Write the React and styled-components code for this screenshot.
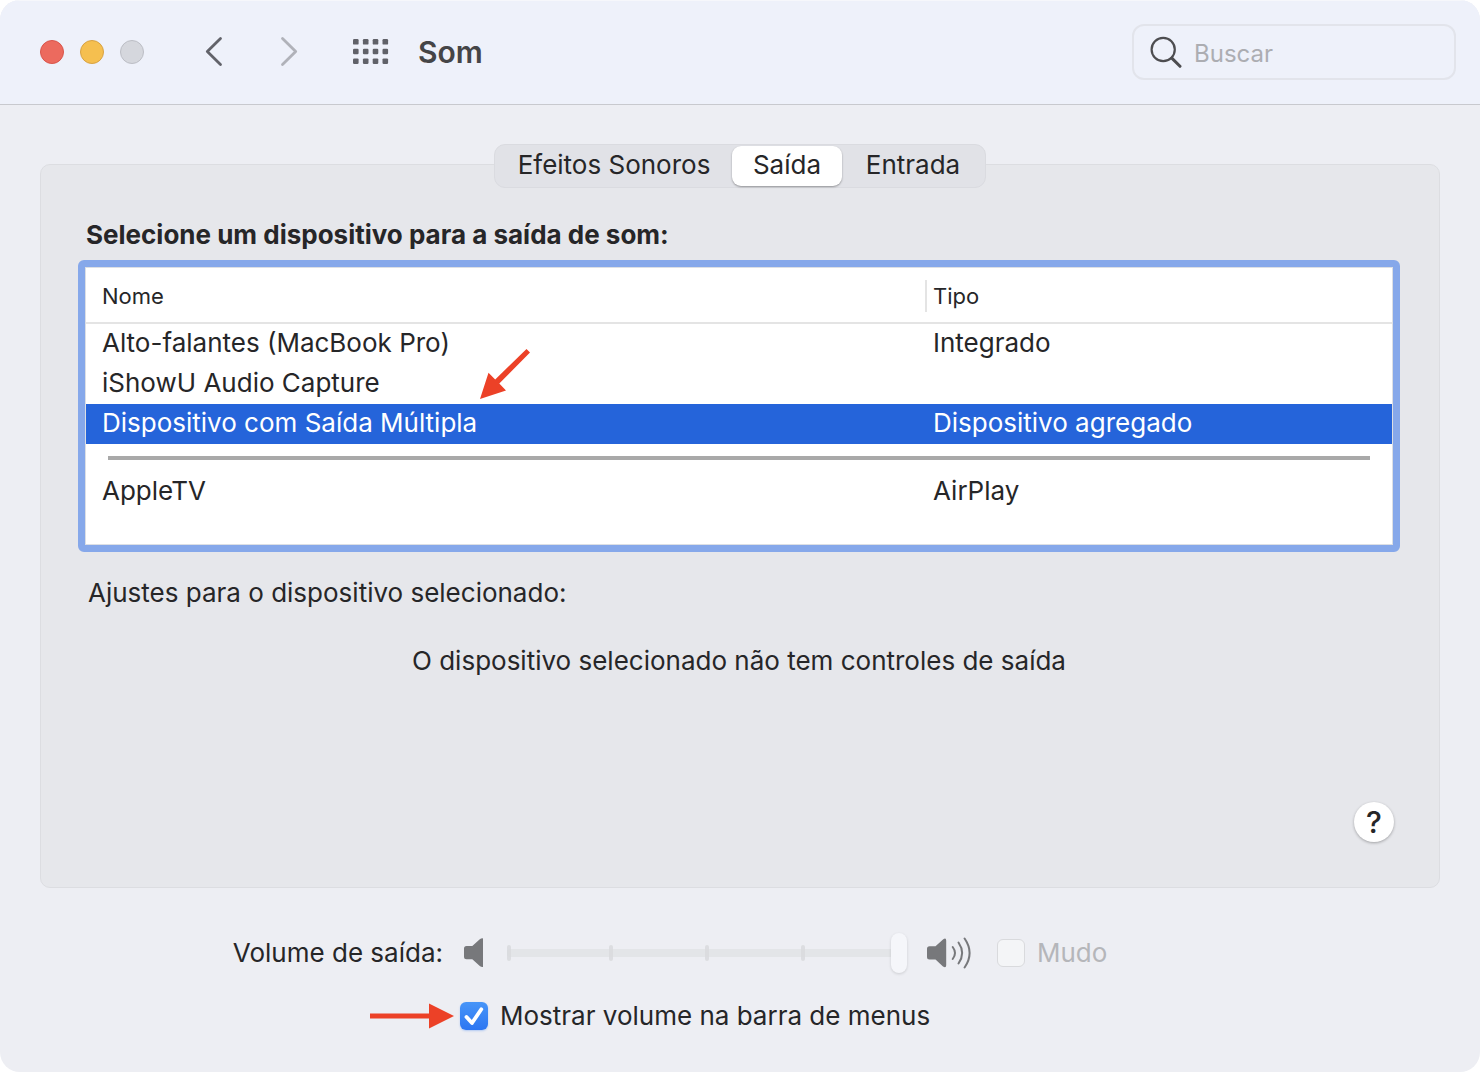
import React, { useState } from "react";
import styled, { createGlobalStyle } from "styled-components";

const GlobalStyle = createGlobalStyle`
  *, *::before, *::after { box-sizing: border-box; }
  html, body { margin: 0; padding: 0; background: #ffffff; }
  body, button, input {
    font-family: Inter, "Liberation Sans", sans-serif;
    font-size: 26px;
    line-height: 32px;
    color: #262628;
  }
  button { margin: 0; padding: 0; border: 0; background: none; }
`;

const Window = styled.main`
  display: flex;
  flex-direction: column;
  min-height: 100vh;
  overflow: hidden;
  border-radius: 20px;
  background: #edeef3;
`;

const Toolbar = styled.header`
  display: flex;
  align-items: center;
  height: 105px;
  padding: 0 24px 2px 40px;
  border-top: 1px solid #f6f7fb;
  border-bottom: 1px solid #c8c9ce;
  background: #eef1fa;
`;

const Lights = styled.div`
  display: flex;
  gap: 16px;
`;

const Light = styled.button`
  width: 24px;
  height: 24px;
  border: 1px solid ${(p) => p.$edge};
  border-radius: 50%;
  background: ${(p) => p.$fill};
`;

const Navigation = styled.nav`
  display: flex;
  gap: 38px;
  margin-left: 52px;
`;

const IconButton = styled.button`
  display: grid;
  place-items: center;
  width: 36px;
  height: 36px;
`;

const Title = styled.h1`
  flex: 1;
  margin: 0 0 0 29px;
  font-size: 30px;
  font-weight: 600;
  line-height: 36px;
  color: #454547;
`;

const AllPanes = styled(IconButton)`
  margin-left: 47px;
`;

const SearchBox = styled.label`
  display: flex;
  align-items: center;
  gap: 12px;
  width: 324px;
  height: 56px;
  padding: 0 16px;
  border: 2px solid #e2e4eb;
  border-radius: 12px;
`;

const SearchInput = styled.input`
  flex: 1;
  min-width: 0;
  padding: 4px 0 0;
  border: 0;
  outline: 0;
  background: transparent;
  font-size: 24px;
  &::placeholder { color: #acadb2; opacity: 1; }
`;

const Content = styled.div`
  display: flex;
  flex: 1;
  flex-direction: column;
  padding: 39px 40px 40px;
`;

const Tabs = styled.div`
  display: grid;
  grid-template-columns: 236px 110px 142px;
  align-self: center;
  z-index: 1;
  height: 44px;
  margin-bottom: -24px;
  padding: 1px;
  border: 1px solid #dadbe0;
  border-radius: 11px;
  background: #e1e2e7;
`;

const Tab = styled.button`
  height: 40px;
  padding-bottom: 2px;
  border-radius: 9px;
  background: ${(p) => (p.$active ? "#ffffff" : "transparent")};
  box-shadow: ${(p) => (p.$active ? "0 1px 2px rgba(0, 0, 0, 0.35)" : "none")};
`;

const Panel = styled.section`
  display: flex;
  flex: 1;
  flex-direction: column;
  padding: 54px 39px 45px 37px;
  border: 1px solid #dcdde1;
  border-radius: 10px;
  background: #e6e7eb;
`;

const Heading = styled.h2`
  margin: 0 0 9px 8px;
  font-size: 26px;
  font-weight: 700;
  line-height: 32px;
`;

const TableFrame = styled.div`
  height: 292px;
  border: 7px solid #86a8ea;
  border-radius: 6px;
  background: #ffffff;
`;

const TableInner = styled.div`
  height: 100%;
  border: 1px solid #dcdfe4;
`;

const DeviceTable = styled.table`
  width: 100%;
  table-layout: fixed;
  border-collapse: separate;
  border-spacing: 0;
`;

const HeadCell = styled.th`
  width: ${(p) => p.$width};
  height: 56px;
  padding: 2px 0 0;
  border-bottom: 2px solid #e4e4e4;
  font-size: 22px;
  font-weight: 400;
  line-height: 32px;
  text-align: left;
`;

const HeadLabel = styled.span`
  display: block;
  padding-left: ${(p) => (p.$divided ? "6px" : "16px")};
  border-left: ${(p) => (p.$divided ? "2px solid #e4e4e4" : "0")};
`;

const DeviceRow = styled.tr`
  height: 40px;
  background: ${(p) => (p.$selected ? "#2564da" : "transparent")};
  color: ${(p) => (p.$selected ? "#ffffff" : "#262628")};
`;

const Cell = styled.td`
  position: relative;
  height: 40px;
  padding: 2px 0 4px ${(p) => (p.$first ? "16px" : "8px")};
`;

const RuleCell = styled.td`
  height: 28px;
  padding: 0 22px;
`;

const Rule = styled.hr`
  height: 4px;
  margin: 0;
  border: 0;
  background: #a9a9a9;
`;

const RowArrow = styled.svg`
  position: absolute;
  left: 394px;
  bottom: 44px;
`;

const Note = styled.p`
  margin: 25px 0 0 10px;
`;

const Message = styled.p`
  margin: 36px 0 0;
  text-align: center;
`;

const HelpButton = styled.button`
  align-self: flex-end;
  width: 40px;
  height: 40px;
  margin: auto 6px 0 0;
  border-radius: 50%;
  background: #ffffff;
  box-shadow: 0 1px 3px rgba(0, 0, 0, 0.3);
  font-size: 30px;
  font-weight: 500;
`;

const Footer = styled.footer`
  display: grid;
  grid-template-columns: 403px 1fr;
  gap: 27px 17px;
  align-items: center;
  padding-top: 45px;
`;

const VolumeLabel = styled.label`
  justify-self: end;
`;

const VolumeControls = styled.div`
  display: flex;
  align-items: center;
  height: 40px;
`;

const QuietIcon = styled.svg`
  margin-left: 4px;
`;

const LoudIcon = styled.svg`
  margin-left: 20px;
`;

const SliderBox = styled.div`
  display: grid;
  align-items: center;
  width: 400px;
  margin-left: 22px;
`;

const Ticks = styled.div`
  grid-area: 1 / 1;
  display: grid;
  grid-template-columns: 102fr 96fr 96fr 106fr;
`;

const Tick = styled.span`
  width: 4px;
  height: 16px;
  border-radius: 2px;
  background: #dcdde1;
`;

const Slider = styled.input`
  grid-area: 1 / 1;
  appearance: none;
  width: 100%;
  height: 40px;
  margin: 0;
  background: transparent;
  &::-webkit-slider-runnable-track {
    height: 8px;
    border-radius: 4px;
    background: rgba(218, 219, 222, 0.5);
  }
  &::-webkit-slider-thumb {
    appearance: none;
    width: 16px;
    height: 40px;
    margin-top: -16px;
    border-radius: 8px;
    background: #f5f6fa;
    box-shadow: 0 1px 3px rgba(0, 0, 0, 0.14);
  }
`;

const CheckLabel = styled.label`
  position: relative;
  display: flex;
  align-items: center;
  gap: 12px;
  justify-self: start;
  margin-left: ${(p) => (p.$muted ? "25px" : "0")};
  color: ${(p) => (p.$muted ? "#b5b6ba" : "#262628")};
`;

const CheckBox = styled.input`
  appearance: none;
  display: grid;
  place-items: center;
  width: 28px;
  height: 28px;
  margin: 0;
  border: 1px solid #d9dadd;
  border-radius: 6px;
  background: #f4f5f7;
  &:checked {
    border: 0;
    background: linear-gradient(#4795f8, #2c76f2);
    box-shadow: 0 1px 2px rgba(44, 118, 242, 0.3);
  }
`;

const CheckStack = styled.span`
  display: grid;
  & > * { grid-area: 1 / 1; }
  & > svg { pointer-events: none; }
`;

const MenuArrow = styled.svg`
  position: absolute;
  right: 100%;
  margin-right: 6px;
`;

const devices = [
  { name: "Alto-falantes (MacBook Pro)", type: "Integrado" },
  { name: "iShowU Audio Capture", type: "" },
  { name: "Dispositivo com Saída Múltipla", type: "Dispositivo agregado", marked: true },
];

const tabs = ["Efeitos Sonoros", "Saída", "Entrada"];

export default function App() {
  const [tab, setTab] = useState("Saída");
  const [selected, setSelected] = useState("Dispositivo com Saída Múltipla");
  const [inMenuBar, setInMenuBar] = useState(true);

  return (
    <>
      <GlobalStyle />
      <Window>
        <Toolbar>
          <Lights>
            <Light aria-label="Fechar" $fill="#ec6a5e" $edge="#d9554b" />
            <Light aria-label="Minimizar" $fill="#f5bf4f" $edge="#d8a243" />
            <Light aria-label="Zoom" $fill="#d5d7dd" $edge="#bcbec5" />
          </Lights>
          <Navigation>
            <IconButton aria-label="Voltar">
              <svg width="36" height="36" viewBox="0 0 36 36" fill="none" stroke="#62636a" strokeWidth="2.8" strokeLinecap="round" strokeLinejoin="round">
                <path d="M24.5 4.5L11.3 17.5L24.5 30.5" />
              </svg>
            </IconButton>
            <IconButton aria-label="Avançar">
              <svg width="36" height="36" viewBox="0 0 36 36" fill="none" stroke="#b0b2b9" strokeWidth="2.8" strokeLinecap="round" strokeLinejoin="round">
                <path d="M12.5 4.5L25.7 17.5L12.5 30.5" />
              </svg>
            </IconButton>
          </Navigation>
          <AllPanes aria-label="Mostrar tudo">
            <svg width="36" height="26" viewBox="0 0 36 26" fill="#606168">
              {[0, 9.7, 19.4].map((y) =>
                [0, 9.9, 19.7, 29.5].map((x) => (
                  <rect key={`${x}-${y}`} x={x} y={y} width="5.6" height="5.6" rx="1.2" />
                ))
              )}
            </svg>
          </AllPanes>
          <Title>Som</Title>
          <SearchBox>
            <svg width="32" height="32" viewBox="0 0 32 32" fill="none" stroke="#4d4d50" strokeLinecap="round">
              <circle cx="13.2" cy="13.5" r="11.6" strokeWidth="2.2" />
              <path d="M21.8 22.1L30 30.3" strokeWidth="3" />
            </svg>
            <SearchInput type="search" placeholder="Buscar" aria-label="Buscar" />
          </SearchBox>
        </Toolbar>

        <Content>
          <Tabs role="tablist">
            {tabs.map((name) => (
              <Tab key={name} role="tab" aria-selected={tab === name} $active={tab === name} onClick={() => setTab(name)}>
                {name}
              </Tab>
            ))}
          </Tabs>

          <Panel>
            <Heading>Selecione um dispositivo para a saída de som:</Heading>
            <TableFrame>
              <TableInner>
                <DeviceTable>
                  <thead>
                    <tr>
                      <HeadCell $width="auto"><HeadLabel>Nome</HeadLabel></HeadCell>
                      <HeadCell $width="467px"><HeadLabel $divided>Tipo</HeadLabel></HeadCell>
                    </tr>
                  </thead>
                  <tbody>
                    {devices.map((d) => (
                      <DeviceRow key={d.name} $selected={selected === d.name} onClick={() => setSelected(d.name)}>
                        <Cell $first>
                          {d.name}
                          {d.marked && (
                            <RowArrow width="50" height="51" viewBox="0 0 50 51" fill="#ec4127" aria-hidden="true">
                              <path d="M0 50L8.5 23.8L15.2 30.5L46.5 0L50 3.5L19.3 34.5L26 41.5Z" />
                            </RowArrow>
                          )}
                        </Cell>
                        <Cell>{d.type}</Cell>
                      </DeviceRow>
                    ))}
                    <tr>
                      <RuleCell colSpan={2}><Rule /></RuleCell>
                    </tr>
                    <DeviceRow $selected={selected === "AppleTV"} onClick={() => setSelected("AppleTV")}>
                      <Cell $first>AppleTV</Cell>
                      <Cell>AirPlay</Cell>
                    </DeviceRow>
                  </tbody>
                </DeviceTable>
              </TableInner>
            </TableFrame>
            <Note>Ajustes para o dispositivo selecionado:</Note>
            <Message>O dispositivo selecionado não tem controles de saída</Message>
            <HelpButton aria-label="Ajuda">?</HelpButton>
          </Panel>

          <Footer>
            <VolumeLabel htmlFor="volume">Volume de saída:</VolumeLabel>
            <VolumeControls>
              <QuietIcon width="21" height="30" viewBox="0 0 21 30" fill="#77787b" aria-hidden="true">
                <path d="M2.5 8H8.3L15.8 1.2Q17.2 .2 19 .4V29Q17.2 29.2 15.8 28L8.3 21.3H2.5Q0 21.3 0 18.8V10.5Q0 8 2.5 8Z" />
              </QuietIcon>
              <SliderBox>
                <Ticks>
                  <Tick /><Tick /><Tick /><Tick />
                </Ticks>
                <Slider id="volume" type="range" min="0" max="100" defaultValue="100" disabled />
              </SliderBox>
              <LoudIcon width="45" height="32" viewBox="0 0 45 32" fill="none" aria-hidden="true">
                <path d="M2.5 9.3H8.5L16 2.4Q19.2 .4 19.2 3.4V28.2Q19.2 31.4 16 29.5L8.5 22.6H2.5Q0 22.6 0 20.1V11.8Q0 9.3 2.5 9.3Z" fill="#77787b" />
                <g stroke="#77787b" strokeWidth="2" strokeLinecap="round">
                  <path d="M25.7 10Q30.3 16 25.7 22" />
                  <path d="M31.5 5.5Q38.8 16 31.5 26.5" />
                  <path d="M37.6 1.5Q47.6 16 37.6 30.5" />
                </g>
              </LoudIcon>
              <CheckLabel $muted>
                <CheckBox type="checkbox" disabled />
                Mudo
              </CheckLabel>
            </VolumeControls>

            <span />
            <CheckLabel>
              <MenuArrow width="84" height="26" viewBox="0 0 84 26" fill="#ec4127" aria-hidden="true">
                <path d="M0 10.5H59V.5L84 13L59 25.5V15.5H0Z" />
              </MenuArrow>
              <CheckStack>
                <CheckBox type="checkbox" checked={inMenuBar} onChange={(e) => setInMenuBar(e.target.checked)} />
                {inMenuBar && (
                  <svg width="28" height="28" viewBox="0 0 28 28" fill="none" stroke="#ffffff" strokeWidth="3.8" strokeLinecap="round" strokeLinejoin="round">
                    <path d="M6.5 15L12 21L21.3 7.3" />
                  </svg>
                )}
              </CheckStack>
              Mostrar volume na barra de menus
            </CheckLabel>
          </Footer>
        </Content>
      </Window>
    </>
  );
}
